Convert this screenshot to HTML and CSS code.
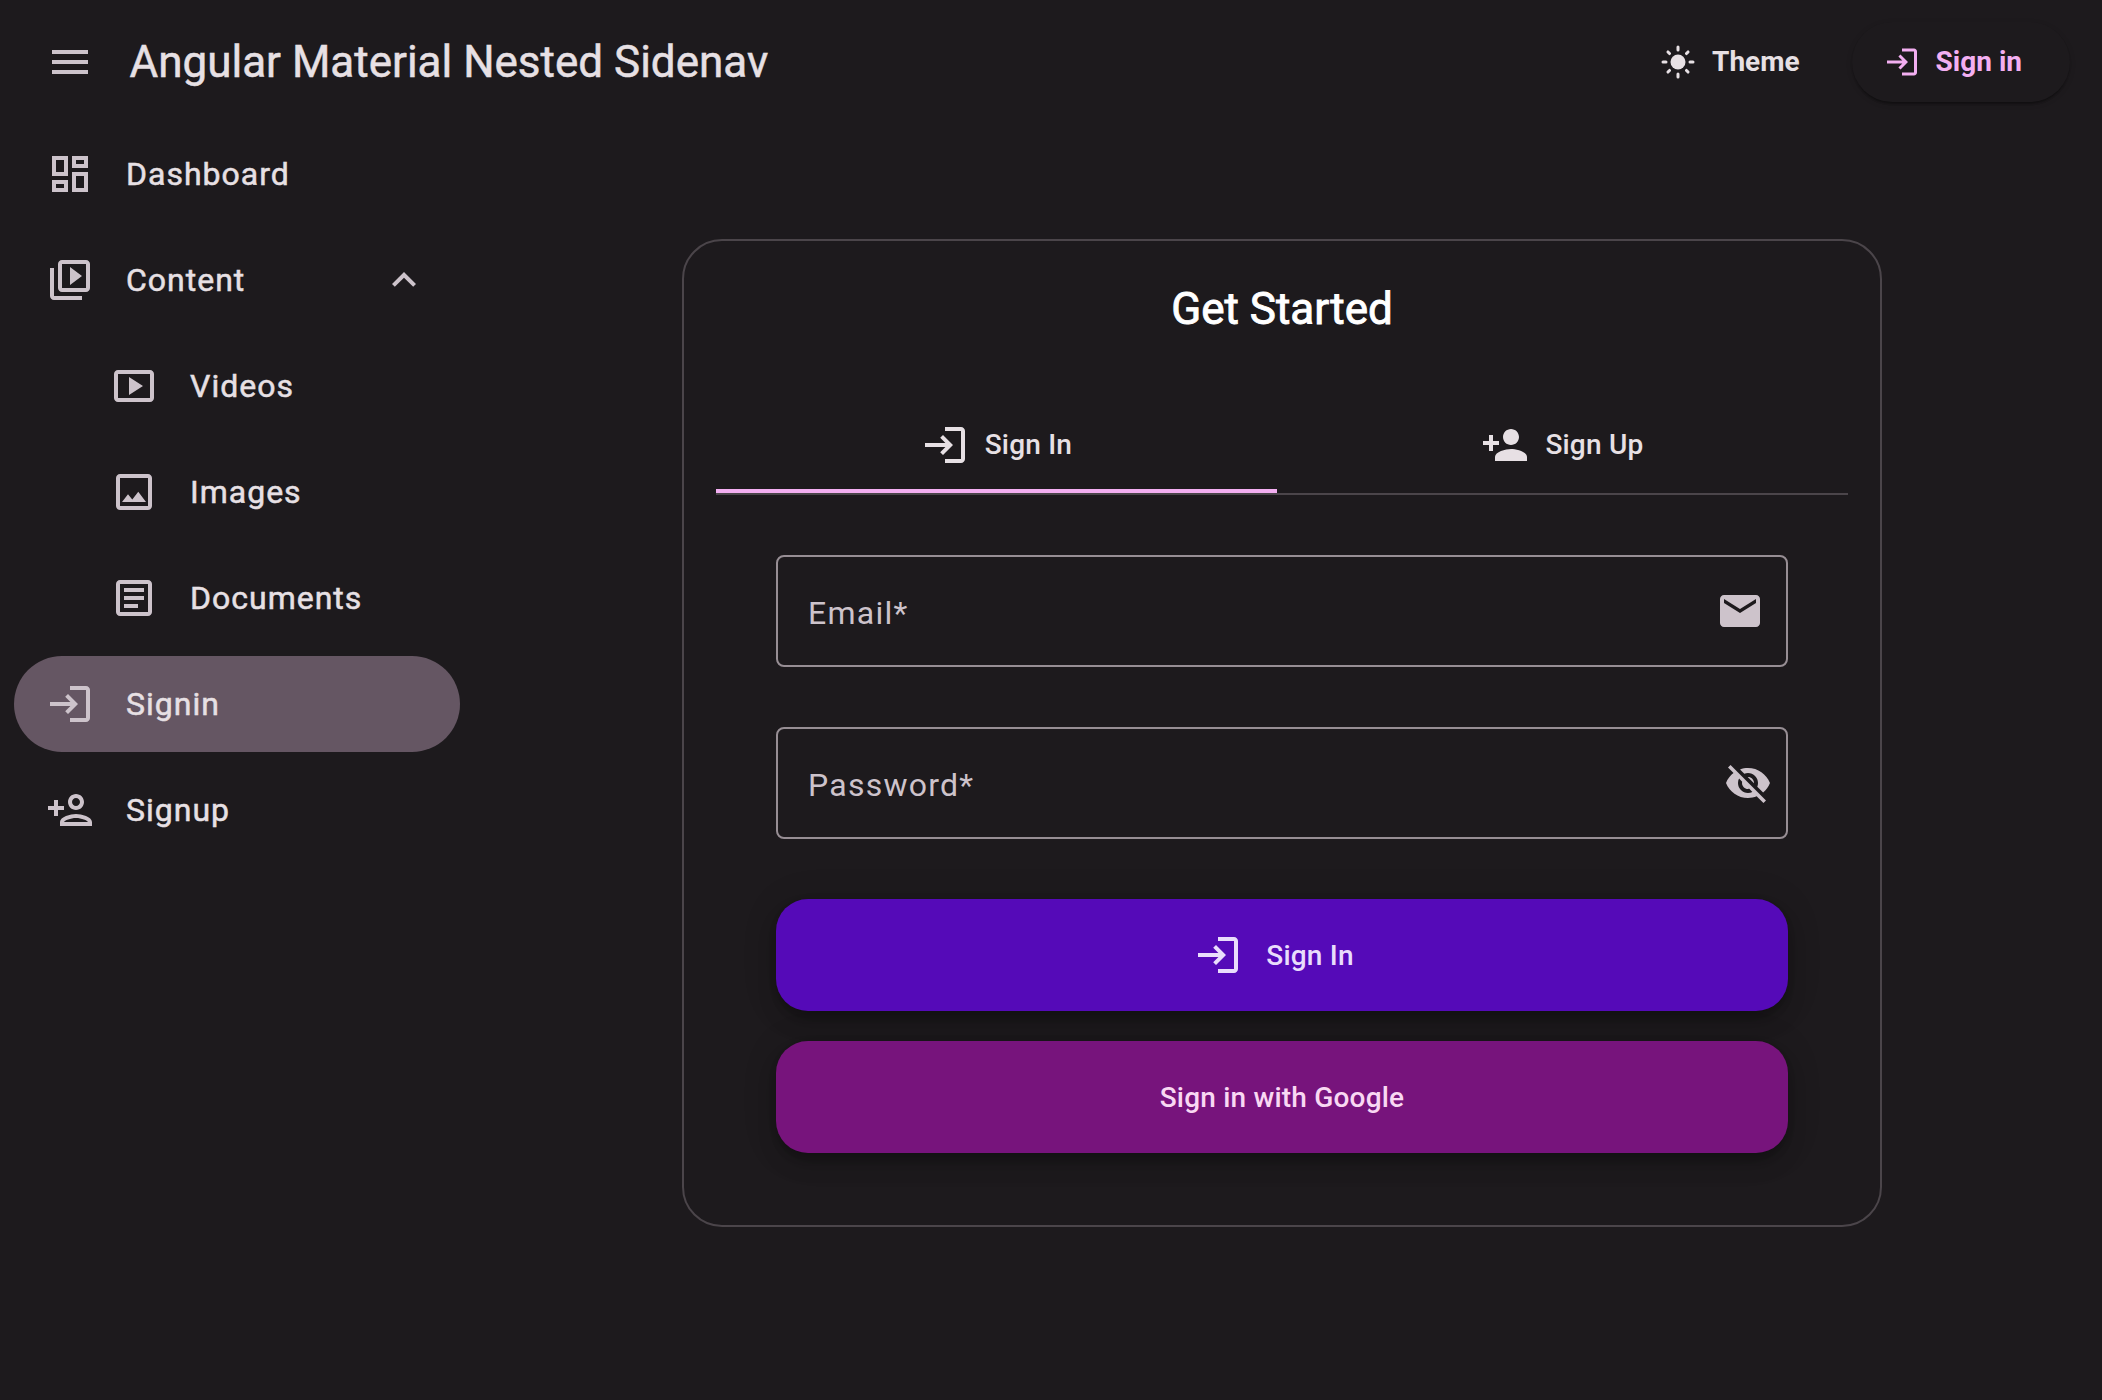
FILE: index.html
```html
<!DOCTYPE html>
<html lang="en">
<head>
<meta charset="utf-8">
<title>Angular Material Nested Sidenav</title>
<link rel="stylesheet" href="styles.css">
</head>
<body>
<svg class="sprite" aria-hidden="true">
  <symbol id="menu" viewBox="0 0 24 24"><path d="M3 18h18v-2H3v2zm0-5h18v-2H3v2zm0-7v2h18V6H3z"/></symbol>
  <symbol id="dashboard" viewBox="0 0 24 24"><path d="M19 5v2h-4V5h4M9 5v6H5V5h4m10 8v6h-4v-6h4M9 17v2H5v-2h4M21 3h-8v6h8V3zM11 3H3v10h8V3zm10 8h-8v10h8V11zm-10 4H3v6h8v-6z"/></symbol>
  <symbol id="library" viewBox="0 0 24 24"><path d="M4 6H2v14c0 1.1.9 2 2 2h14v-2H4V6zm16-4H8c-1.1 0-2 .9-2 2v12c0 1.1.9 2 2 2h12c1.1 0 2-.9 2-2V4c0-1.1-.9-2-2-2zm0 14H8V4h12v12zM12 5.5v9l6-4.5z"/></symbol>
  <symbol id="video" viewBox="0 0 24 24"><path d="M9.5 7.5v9l7-4.5zM20 4H4c-1.1 0-2 .9-2 2v12c0 1.1.9 2 2 2h16c1.1 0 2-.9 2-2V6c0-1.1-.9-2-2-2zm0 14H4V6h16v12z"/></symbol>
  <symbol id="image" viewBox="0 0 24 24"><path d="M19 5v14H5V5h14m0-2H5c-1.1 0-2 .9-2 2v14c0 1.1.9 2 2 2h14c1.1 0 2-.9 2-2V5c0-1.1-.9-2-2-2zm-4.86 8.86l-3 3.87L9 13.14 6 17h12l-3.86-5.14z"/></symbol>
  <symbol id="article" viewBox="0 0 24 24"><path d="M19 5v14H5V5h14m0-2H5c-1.1 0-2 .9-2 2v14c0 1.1.9 2 2 2h14c1.1 0 2-.9 2-2V5c0-1.1-.9-2-2-2zM14 17H7v-2h7v2zm3-4H7v-2h10v2zm0-4H7V7h10v2z"/></symbol>
  <symbol id="login" viewBox="0 0 24 24"><path d="M11 7L9.6 8.4l2.6 2.6H2v2h10.2l-2.6 2.6L11 17l5-5-5-5zm9 12h-8v2h8c1.1 0 2-.9 2-2V5c0-1.1-.9-2-2-2h-8v2h8v14z"/></symbol>
  <symbol id="person-add-outline" viewBox="0 0 24 24"><path d="M15 12c2.21 0 4-1.79 4-4s-1.79-4-4-4-4 1.79-4 4 1.79 4 4 4zm0-6c1.1 0 2 .9 2 2s-.9 2-2 2-2-.9-2-2 .9-2 2-2zm0 8c-2.67 0-8 1.34-8 4v2h16v-2c0-2.66-5.33-4-8-4zm-6 4c.22-.72 3.31-2 6-2 2.7 0 5.8 1.29 6 2H9zm-3-3v-3h3v-2H6V7H4v3H1v2h3v3z"/></symbol>
  <symbol id="person-add" viewBox="0 0 24 24"><path d="M15 12c2.21 0 4-1.79 4-4s-1.79-4-4-4-4 1.79-4 4 1.79 4 4 4zm-9-2V7H4v3H1v2h3v3h2v-3h3v-2H6zm9 4c-2.67 0-8 1.34-8 4v2h16v-2c0-2.66-5.33-4-8-4z"/></symbol>
  <symbol id="expand-less" viewBox="0 0 24 24"><path d="M12 8l-6 6 1.41 1.41L12 10.83l4.59 4.58L18 14z"/></symbol>
  <symbol id="email" viewBox="0 0 24 24"><path d="M20 4H4c-1.1 0-1.99.9-1.99 2L2 18c0 1.1.9 2 2 2h16c1.1 0 2-.9 2-2V6c0-1.1-.9-2-2-2zm0 4l-8 5-8-5V6l8 5 8-5v2z"/></symbol>
  <symbol id="visibility-off" viewBox="0 0 24 24"><path d="M12 7c2.76 0 5 2.24 5 5 0 .65-.13 1.26-.36 1.83l2.92 2.92c1.51-1.26 2.7-2.89 3.43-4.75-1.73-4.39-6-7.5-11-7.5-1.4 0-2.74.25-3.98.7l2.16 2.16C10.74 7.13 11.35 7 12 7zM2 4.27l2.28 2.28.46.46C3.08 8.3 1.78 10.02 1 12c1.73 4.39 6 7.5 11 7.5 1.55 0 3.03-.3 4.38-.84l.42.42L19.73 22 21 20.73 3.27 3 2 4.27zM7.53 9.8l1.55 1.55c-.05.21-.08.43-.08.65 0 1.66 1.34 3 3 3 .22 0 .44-.03.65-.08l1.55 1.55c-.67.33-1.41.53-2.2.53-2.76 0-5-2.24-5-5 0-.79.2-1.53.53-2.2zm4.31-.78l3.15 3.15.02-.16c0-1.66-1.34-3-3-3l-.17.01z"/></symbol>
  <symbol id="light-mode" viewBox="0 0 24 24"><circle cx="12" cy="12" r="5"/><path fill="none" stroke="currentColor" stroke-width="2" stroke-linecap="round" d="M12 2v2M12 20v2M2 12h2M20 12h2M5.3 5.3l1.06 1.06M17.64 17.64l1.06 1.06M5.3 18.7l1.06-1.06M17.64 6.36l1.06-1.06"/></symbol>
</svg>

<header class="toolbar">
  <svg class="icon toolbar-menu"><use href="#menu"/></svg>
  <h1 class="toolbar-title">Angular Material Nested Sidenav</h1>
  <button class="text-button"><svg class="icon icon-small"><use href="#light-mode"/></svg><span class="button-label">Theme</span></button>
  <button class="text-button text-button-raised"><svg class="icon icon-small"><use href="#login"/></svg><span class="button-label">Sign in</span></button>
</header>

<div class="layout">
  <nav class="sidenav">
    <a class="nav-item"><svg class="icon"><use href="#dashboard"/></svg><span class="nav-label">Dashboard</span></a>
    <a class="nav-item"><svg class="icon"><use href="#library"/></svg><span class="nav-label">Content</span><svg class="icon"><use href="#expand-less"/></svg></a>
    <a class="nav-item nav-item-nested"><svg class="icon"><use href="#video"/></svg><span class="nav-label">Videos</span></a>
    <a class="nav-item nav-item-nested"><svg class="icon"><use href="#image"/></svg><span class="nav-label">Images</span></a>
    <a class="nav-item nav-item-nested"><svg class="icon"><use href="#article"/></svg><span class="nav-label">Documents</span></a>
    <a class="nav-item nav-item-active"><svg class="icon"><use href="#login"/></svg><span class="nav-label">Signin</span></a>
    <a class="nav-item"><svg class="icon"><use href="#person-add-outline"/></svg><span class="nav-label">Signup</span></a>
  </nav>

  <main class="content">
    <section class="card">
      <h2 class="card-title">Get Started</h2>
      <div class="tabs">
        <div class="tab tab-active"><svg class="icon"><use href="#login"/></svg><span class="button-label">Sign In</span></div>
        <div class="tab"><svg class="icon"><use href="#person-add"/></svg><span class="button-label">Sign Up</span></div>
      </div>
      <form class="form">
        <div class="field"><span class="field-label">Email*</span><svg class="icon"><use href="#email"/></svg></div>
        <div class="field field-password"><span class="field-label">Password*</span><svg class="icon"><use href="#visibility-off"/></svg></div>
        <button type="button" class="fab fab-tertiary"><svg class="icon"><use href="#login"/></svg>Sign In</button>
        <button type="button" class="fab fab-primary">Sign in with Google</button>
      </form>
    </section>
  </main>
</div>
</body>
</html>
```
FILE: styles.css
```css
:root {
  --surface: #1d1a1d;
  --on-surface: #e7e0e4;
  --on-surface-variant: #cdc3cb;
  --outline: #978e94;
  --outline-variant: #4b454a;
  --primary: #f3aff1;
}

* { box-sizing: border-box; }

body {
  margin: 0;
  height: 1400px;
  background: var(--surface);
  color: var(--on-surface);
  font-family: Roboto, "Liberation Sans", sans-serif;
  overflow: hidden;
}

.sprite { display: none; }

.icon {
  display: block;
  flex: none;
  width: 48px;
  height: 48px;
  fill: currentColor;
}

.icon-small { width: 36px; height: 36px; }

/* Toolbar */
.toolbar {
  display: flex;
  align-items: center;
  height: 124px;
  padding: 0 32px 0 46px;
}

.toolbar-menu { color: var(--on-surface-variant); }

.toolbar-title {
  flex: 1;
  margin: 0 0 0 35.5px;
  font-size: 44px;
  font-weight: 400;
  line-height: 56px;
  -webkit-text-stroke: .5px currentColor;
}

.text-button {
  display: flex;
  align-items: center;
  gap: 16px;
  height: 80px;
  padding: 0 24px;
  border: 0;
  border-radius: 40px;
  background: transparent;
  color: var(--on-surface);
  font: 700 28px Roboto, sans-serif;
}

.button-label { padding-bottom: 1px; }

.text-button-raised {
  margin-left: 28px;
  padding: 0 48px 0 32px;
  background: var(--surface);
  color: var(--primary);
  box-shadow: 0 4px 2px -2px rgba(0, 0, 0, .2), 0 2px 2px rgba(0, 0, 0, .14), 0 2px 6px rgba(0, 0, 0, .12);
}

.layout { display: flex; }

/* Side navigation */
.sidenav {
  display: flex;
  flex-direction: column;
  gap: 10px;
  width: 462px;
  padding: 2px 2px 0 14px;
}

.nav-item {
  display: flex;
  align-items: center;
  height: 96px;
  padding: 0 32px;
  border-radius: 48px;
  color: var(--on-surface-variant);
}

.nav-item-nested { padding-left: 96px; }
.nav-item-active { background: #655663; }

.nav-label {
  flex: 1;
  margin-left: 32px;
  color: var(--on-surface);
  font-size: 32px;
  font-weight: 400;
  letter-spacing: 1px;
  -webkit-text-stroke: .5px currentColor;
}

/* Sign-in card */
.content {
  flex: 1;
  display: flex;
  justify-content: center;
  align-items: flex-start;
  padding: 115px 0 0;
}

.card {
  width: 1200px;
  height: 988px;
  padding: 40px 32px 0;
  border: 2px solid var(--outline-variant);
  border-radius: 40px;
}

.card-title {
  margin: 0;
  color: #fff;
  font-size: 44px;
  font-weight: 400;
  line-height: 56px;
  text-align: center;
  -webkit-text-stroke: .9px currentColor;
}

.tabs {
  display: flex;
  margin-top: 60px;
  border-bottom: 2px solid var(--outline-variant);
}

.tab {
  flex: 1 1 auto;
  display: flex;
  align-items: center;
  justify-content: center;
  gap: 16px;
  height: 96px;
  font-size: 28px;
  font-weight: 500;
  letter-spacing: .2px;
}

.tab-active { box-shadow: inset 0 -4px var(--primary); }

.form { padding: 60px 60px 0; }

.field {
  display: flex;
  align-items: center;
  justify-content: space-between;
  height: 112px;
  margin-bottom: 60px;
  padding: 0 22px 0 30px;
  border: 2px solid var(--outline);
  border-radius: 8px;
  color: var(--on-surface-variant);
}

.field-password { padding-right: 14px; }

.field-label {
  padding-top: 3px;
  font-size: 32px;
  letter-spacing: 1.25px;
}

.fab {
  display: flex;
  align-items: center;
  justify-content: center;
  width: 100%;
  height: 112px;
  margin-bottom: 30px;
  border: 0;
  border-radius: 32px;
  font: 500 28px Roboto, sans-serif;
  letter-spacing: .2px;
  box-shadow: 0 6px 10px -2px rgba(0, 0, 0, .2), 0 12px 20px rgba(0, 0, 0, .14), 0 2px 36px rgba(0, 0, 0, .12);
}

.fab .icon { margin: 0 24px 0 -16px; }

.fab-tertiary { background: #550ab8; color: #e9ddfc; }
.fab-primary { background: #77147c; color: #f9d8f3; }
```
